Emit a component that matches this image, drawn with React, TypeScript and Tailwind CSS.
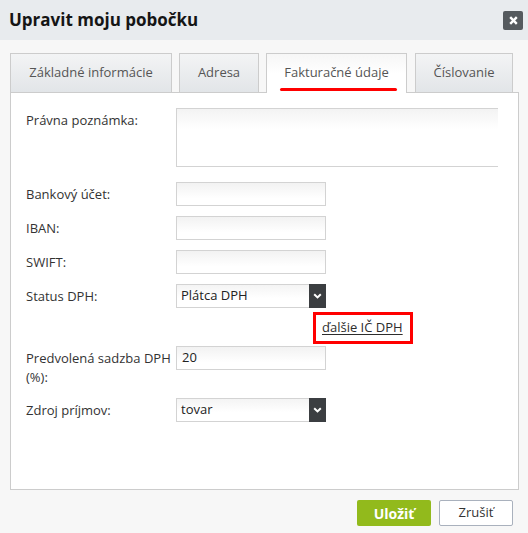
import React from "react";

const font = { fontFamily: '"Open Sans", "Noto Sans", Arial, sans-serif' };

function Input({ value = "" }: { value?: string }) {
  return (
    <div className="w-[150px] h-[24px] border border-[#d3d3d3] bg-linear-to-b from-[#f2f2f2] to-white to-[70%] pl-[5px] flex items-center text-[13px] text-[#222]">
      {value}
    </div>
  );
}

function Select({ value }: { value: string }) {
  return (
    <div className="w-[150px] h-[24px] border border-[#d3d3d3] bg-linear-to-b from-[#f4f4f4] to-white to-[60%] flex items-stretch text-[13px] text-[#222]">
      <div className="flex-1 pl-[4px] flex items-center">{value}</div>
      <div className="w-[17px] -my-px -mr-px bg-[#3b3e41] flex items-center justify-center">
        <svg width="9" height="6" viewBox="0 0 9 6">
          <polyline points="1.2,1.2 4.5,4.4 7.8,1.2" fill="none" stroke="white" strokeWidth="2" />
        </svg>
      </div>
    </div>
  );
}

function Row({ label, children, className = "" }: { label: React.ReactNode; children: React.ReactNode; className?: string }) {
  return (
    <div className={"flex items-start " + className}>
      <div className="w-[150px] pt-[3px] text-[13px] leading-[19px] text-[#333] pr-[2px]">{label}</div>
      {children}
    </div>
  );
}

export default function App() {
  const tabs = [
    { label: "Základné informácie", w: "w-[162px]", ml: "" },
    { label: "Adresa", w: "w-[80px]", ml: "ml-[7px]" },
    { label: "Fakturačné údaje", w: "w-[141px]", ml: "ml-[7px]", active: true },
    { label: "Číslovanie", w: "w-[98px]", ml: "ml-[8px]" },
  ];
  return (
    <div style={font} className="w-[528px] h-[533px] bg-[#f7f7f7] flex flex-col overflow-hidden">
      <div className="h-[40px] bg-[#e8ebee] flex items-center justify-between pl-[9px] pr-[5px]">
        <div className="text-[17px] font-bold text-[#151515]">Upravit moju pobočku</div>
        <div className="w-[20px] h-[19px] bg-[#555a5e] rounded-[2px] flex items-center justify-center">
          <svg width="9" height="9" viewBox="0 0 9 9">
            <line x1="1.2" y1="1.2" x2="7.8" y2="7.8" stroke="white" strokeWidth="2.4" />
            <line x1="7.8" y1="1.2" x2="1.2" y2="7.8" stroke="white" strokeWidth="2.4" />
          </svg>
        </div>
      </div>

      <div className="pt-[13px] pl-[10px] pr-[9px]">
        <div className="flex items-end">
          {tabs.map((t) =>
            t.active ? (
              <div
                key={t.label}
                className={`${t.w} ${t.ml} relative z-10 -mb-px h-[40px] border-t border-x border-[#cccccc] bg-linear-to-b from-[#f6f6f6] to-white to-[50%] flex items-center justify-center text-[13px] text-[#555]`}
              >
                <span className="-mt-[1px]">{t.label}</span>
                <div className="absolute left-[13px] w-[117px] top-[34px] h-[3px] rounded-full bg-[#ff0000]" />
              </div>
            ) : (
              <div
                key={t.label}
                className={`${t.w} ${t.ml} h-[39px] border-t border-x border-[#cccccc] bg-linear-to-b from-[#f3f4f5] to-[#e2e5e8] flex items-center justify-center text-[13px] text-[#555]`}
              >
                {t.label}
              </div>
            )
          )}
        </div>

        <div className="h-[398px] border border-[#cccccc] bg-white pl-[15px] pt-[15px]">
          <Row label="Právna poznámka:">
            <div className="w-[322px] h-[59px] border border-r-0 border-[#d3d3d3] bg-linear-to-b from-[#f3f3f3] to-white to-[35%]" />
          </Row>
          <Row label="Bankový účet:" className="mt-[15px]">
            <Input />
          </Row>
          <Row label="IBAN:" className="mt-[10px]">
            <Input />
          </Row>
          <Row label="SWIFT:" className="mt-[10px]">
            <Input />
          </Row>
          <Row label="Status DPH:" className="mt-[10px]">
            <Select value="Plátca DPH" />
          </Row>
          <div className="mt-[4px] ml-[287px] w-[100px] h-[32px] border-[3px] border-[#ff0000] pl-[6px] flex items-center text-[13px]">
            <a href="#" className="underline text-[#2d2d2d] underline-offset-[2px]">ďalšie IČ DPH</a>
          </div>
          <Row label="Predvolená sadzba DPH (%):" className="mt-[2px]">
            <Input value="20" />
          </Row>
          <Row label="Zdroj príjmov:" className="mt-[11px]">
            <Select value="tovar" />
          </Row>
        </div>

        <div className="flex justify-end gap-[8px] pt-[10px] pr-[6px]">
          <button className="w-[74px] h-[26px] rounded-[2px] bg-[#92ba1c] text-white font-bold text-[14px]">Uložiť</button>
          <button className="w-[74px] h-[26px] rounded-[2px] border border-[#a9b1bd] bg-white text-[#333] text-[13px]">Zrušiť</button>
        </div>
      </div>
    </div>
  );
}
